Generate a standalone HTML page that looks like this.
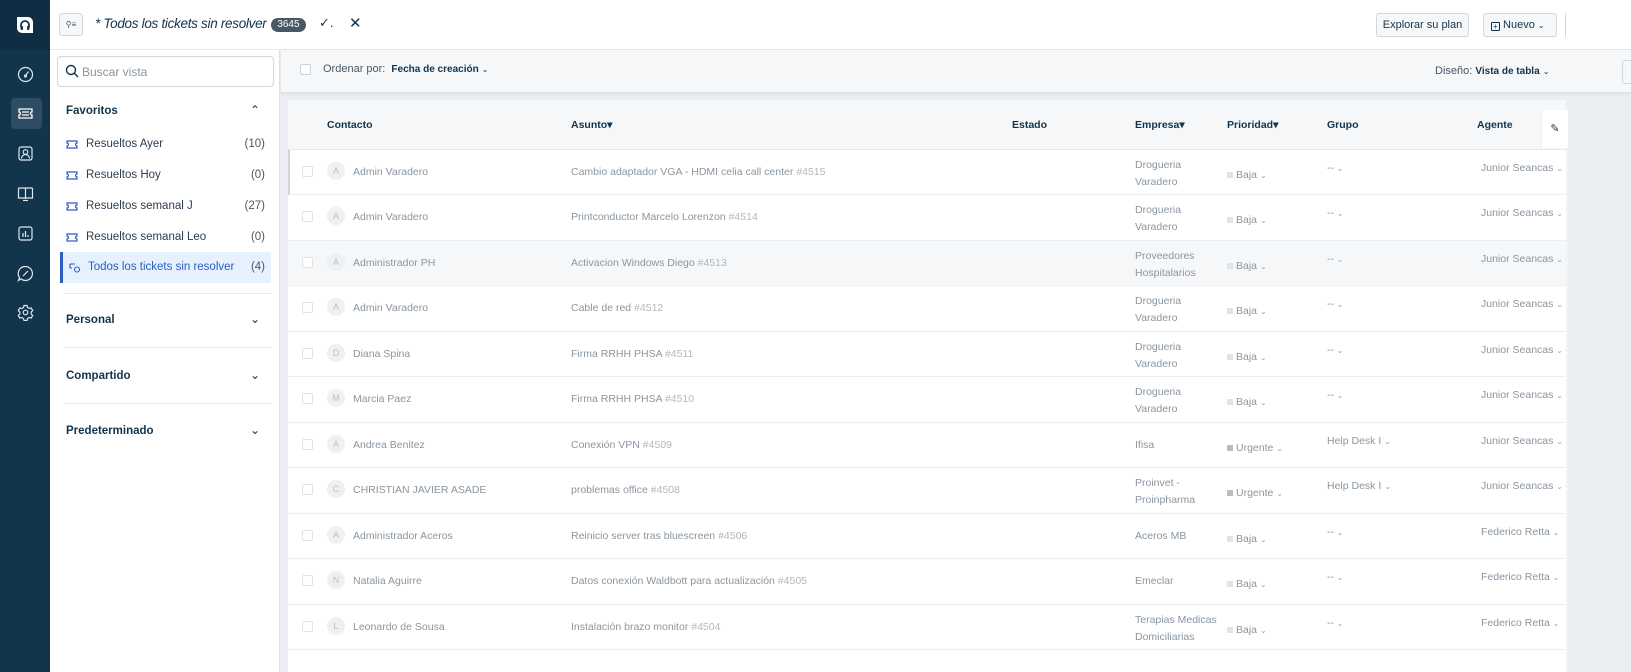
<!DOCTYPE html>
<html><head><meta charset="utf-8"><style>
*{box-sizing:border-box;margin:0;padding:0}
body{width:1631px;height:672px;overflow:hidden;font-family:"Liberation Sans",sans-serif;background:#ebeff3;position:relative;color:#12344d}
.a{position:absolute;white-space:nowrap}
#nav{left:0;top:0;width:50px;height:672px;background:#12344d}
#navtop{left:0;top:0;width:50px;height:50px;background:#0f2d43}
.ni{position:absolute;left:17px;width:17px;height:17px}
#top{left:50px;top:0;width:1581px;height:50px;background:#fff;border-bottom:1px solid #e3e8ed}
#views{left:50px;top:50px;width:230px;height:622px;background:#fff;border-right:1px solid #dfe4ea}
.vi{position:absolute;left:10px;width:211px;height:31px;font-size:11.5px;color:#2c3e50;white-space:nowrap}
.vi svg{position:absolute;left:6px;top:11px}
.vi .t{position:absolute;left:26px;top:9px}
.vi .c{position:absolute;right:6px;top:9px;color:#475867}
.sec{position:absolute;left:16px;font-size:11.5px;font-weight:bold;color:#12344d}
.chev{position:absolute;left:200px;font-size:12px;color:#12344d}
.hr{position:absolute;left:14px;width:208px;height:1px;background:#e8ecf0}
#tb{left:281px;top:50px;width:1350px;height:43px;background:#f5f7f9;border-bottom:1px solid #dfe4ea;box-shadow:0 1px 3px rgba(0,0,0,.08)}
#tbl{left:288px;top:100px;width:1278px;height:572px;background:#fff}
#th{left:288px;top:100px;width:1278px;height:50px;background:#f5f7f9;border-bottom:1px solid #e6eaee;font-size:10.5px;font-weight:bold;color:#12344d}
#th span{position:absolute;top:19px}
.row{position:absolute;left:288px;width:1278px;height:46px;border-bottom:1px solid #ebeff3;font-size:10.5px;color:#8a96a0;background:#fff;white-space:nowrap}
.row>*{position:absolute}
.cb{left:14px;top:16px;width:11px;height:11px;border:1px solid #dfe3e7;border-radius:2px;background:#fff}
.av{left:39px;top:12px;width:18px;height:18px;border-radius:50%;background:#eef0f2;color:#b8c0c6;font-size:9px;text-align:center;line-height:18px}
.nm{left:65px;top:16px;color:#8a96a0}
.sb{left:283px;top:16px}
.sb i{font-style:normal;color:#b0b8bf}
.em{left:847px;top:7px;line-height:17px}
.em1{left:847px;top:16px}
.pr{left:939px;top:19px}
.pr b{display:inline-block;width:6px;height:6px;background:#e1e4e7;margin-right:3px;vertical-align:0px}
.pr b.u{background:#b8bec4}
.gr{left:1039px;top:12px}
.ag{left:1193px;top:12px}
.k{font-size:8px;color:#9aa4ad}
</style></head><body>
<div id="nav" class="a"></div>
<div id="navtop" class="a"></div>
<svg class="a" style="left:13px;top:13px" width="24" height="24" viewBox="0 0 24 24"><path d="M4 4h11a5 5 0 0 1 5 5v11H9a5 5 0 0 1-5-5z" fill="#fff"/><path d="M8 14v-2a4 4 0 0 1 8 0v2" stroke="#12344d" stroke-width="1.8" fill="none"/><rect x="7.5" y="13" width="2.5" height="4" rx="1" fill="#12344d"/><rect x="14" y="13" width="2.5" height="4" rx="1" fill="#12344d"/></svg>
<div class="a" style="left:11px;top:98px;width:31px;height:31px;background:#2e4d65;border-radius:4px"></div>
<svg class="ni" style="top:66px" viewBox="0 0 17 17" fill="none" stroke="#dfe6ec" stroke-width="1.2"><circle cx="8.5" cy="8.5" r="7"/><path d="M8.5 9.5l3-4"/><circle cx="8.5" cy="10" r="1"/></svg>
<svg class="ni" style="top:105px" viewBox="0 0 17 17" fill="none" stroke="#fff" stroke-width="1.3"><path d="M2 4h13v3a1.5 1.5 0 0 0 0 3v3H2v-3a1.5 1.5 0 0 0 0-3z"/><path d="M5 7h7M5 10h7"/></svg>
<svg class="ni" style="top:145px" viewBox="0 0 17 17" fill="none" stroke="#dfe6ec" stroke-width="1.2"><rect x="2" y="2" width="13" height="13" rx="2"/><circle cx="8.5" cy="7" r="2.3"/><path d="M4.5 13.5a4 4 0 0 1 8 0"/></svg>
<svg class="ni" style="top:185px" viewBox="0 0 17 17" fill="none" stroke="#dfe6ec" stroke-width="1.2"><path d="M1.5 3h6a1 1 0 0 1 1 1v10M15.5 3h-6a1 1 0 0 0-1 1M1.5 3v10h14V3"/><path d="M6 15.5h5"/></svg>
<svg class="ni" style="top:225px" viewBox="0 0 17 17" fill="none" stroke="#dfe6ec" stroke-width="1.2"><rect x="2" y="2" width="13" height="13" rx="2"/><path d="M6 12V8M8.5 12V6M11 12v-2"/></svg>
<svg class="ni" style="top:265px" viewBox="0 0 17 17" fill="none" stroke="#dfe6ec" stroke-width="1.2"><path d="M8.5 1.5a7 7 0 1 1-4.5 12.4L1.5 15.5l1-3A7 7 0 0 1 8.5 1.5z"/><path d="M6 11l5-5"/></svg>
<svg class="ni" style="top:304px" viewBox="0 0 17 17" fill="none" stroke="#dfe6ec" stroke-width="1.2"><circle cx="8.5" cy="8.5" r="2.3"/><path d="M7 1.5h3l.5 2 1.7 1 2-.6 1.5 2.6-1.5 1.5v2l1.5 1.5-1.5 2.6-2-.6-1.7 1-.5 2H7l-.5-2-1.7-1-2 .6-1.5-2.6 1.5-1.5v-2L1.3 6.5l1.5-2.6 2 .6 1.7-1z"/></svg>

<div id="top" class="a">
  <div class="a" style="left:9px;top:13px;width:24px;height:23px;border:1px solid #cfd7df;border-radius:3px;background:#f5f7f9;font-size:8px;text-align:center;line-height:21px;color:#475867">⚲≡</div>
  <div class="a" style="left:45px;top:16px;font-size:13.5px;font-style:italic;color:#12344d;letter-spacing:-0.3px">* Todos los tickets sin resolver <span style="display:inline-block;font-style:normal;letter-spacing:0;width:35px;height:14px;border-radius:7px;background:#475867;color:#fff;font-size:10px;text-align:center;line-height:14px;vertical-align:1px;margin-left:1px">3645</span></div>
  <div class="a" style="left:269px;top:15px;font-size:13px;color:#12344d">✓.</div>
  <div class="a" style="left:299px;top:14px;font-size:15px;color:#12344d">✕</div>
  <div class="a" style="left:1326px;top:13px;width:93px;height:24px;border:1px solid #cfd7df;border-radius:3px;background:#f5f7f9;font-size:11px;text-align:center;line-height:22px">Explorar su plan</div>
  <div class="a" style="left:1433px;top:13px;width:74px;height:24px;border:1px solid #cfd7df;border-radius:3px;background:#f5f7f9;font-size:11px;line-height:22px;padding-left:7px"><span style="display:inline-block;width:9px;height:9px;border:1px solid #12344d;border-radius:1px;font-size:8px;line-height:7px;text-align:center;vertical-align:-1px">+</span> Nuevo <span class="k" style="color:#12344d">⌄</span></div>
  <div class="a" style="left:1515px;top:13px;width:1px;height:24px;background:#cfd7df"></div>
</div>

<div id="views" class="a">
  <div class="a" style="left:7px;top:6px;width:217px;height:31px;border:1px solid #cfd7df;border-radius:4px"></div>
  <svg class="a" style="left:15px;top:14px" width="14" height="14" viewBox="0 0 14 14" fill="none" stroke="#12344d" stroke-width="1.4"><circle cx="6" cy="6" r="4.5"/><path d="M9.3 9.3L13 13"/></svg>
  <div class="a" style="left:32px;top:15px;font-size:12px;color:#8a96a0">Buscar vista</div>
  <div class="sec" style="top:55px">Favoritos</div><div class="chev" style="top:53px">⌃</div>
  <div class="vi" style="top:79px"><svg width="12" height="9" viewBox="0 0 12 9" fill="none" stroke="#2c5cc5" stroke-width="1.2"><path d="M1 1h10v2a1.5 1.5 0 0 0 0 3v2H1V6a1.5 1.5 0 0 0 0-3z"/></svg><span class="t">Resueltos Ayer</span><span class="c">(10)</span></div>
  <div class="vi" style="top:110px"><svg width="12" height="9" viewBox="0 0 12 9" fill="none" stroke="#2c5cc5" stroke-width="1.2"><path d="M1 1h10v2a1.5 1.5 0 0 0 0 3v2H1V6a1.5 1.5 0 0 0 0-3z"/></svg><span class="t">Resueltos Hoy</span><span class="c">(0)</span></div>
  <div class="vi" style="top:141px"><svg width="12" height="9" viewBox="0 0 12 9" fill="none" stroke="#2c5cc5" stroke-width="1.2"><path d="M1 1h10v2a1.5 1.5 0 0 0 0 3v2H1V6a1.5 1.5 0 0 0 0-3z"/></svg><span class="t">Resueltos semanal J</span><span class="c">(27)</span></div>
  <div class="vi" style="top:172px"><svg width="12" height="9" viewBox="0 0 12 9" fill="none" stroke="#2c5cc5" stroke-width="1.2"><path d="M1 1h10v2a1.5 1.5 0 0 0 0 3v2H1V6a1.5 1.5 0 0 0 0-3z"/></svg><span class="t">Resueltos semanal Leo</span><span class="c">(0)</span></div>
  <div class="vi" style="top:202px;background:#e5f2fd;border-left:3px solid #2c5cc5;border-radius:0 3px 3px 0;color:#2c5cc5"><svg style="left:6px" width="12" height="10" viewBox="0 0 12 10" fill="none" stroke="#2c5cc5" stroke-width="1.1"><path d="M1 1h5M1 1v4M1 5h2"/><circle cx="8" cy="6.5" r="2.5"/></svg><span class="t" style="left:25px">Todos los tickets sin resolver</span><span class="c">(4)</span></div>
  <div class="hr" style="top:243px"></div>
  <div class="sec" style="top:264px">Personal</div><div class="chev" style="top:262px">⌄</div>
  <div class="hr" style="top:297px"></div>
  <div class="sec" style="top:320px">Compartido</div><div class="chev" style="top:318px">⌄</div>
  <div class="hr" style="top:353px"></div>
  <div class="sec" style="top:375px">Predeterminado</div><div class="chev" style="top:373px">⌄</div>
</div>

<div id="tb" class="a">
  <div class="a" style="left:19px;top:14px;width:11px;height:11px;border:1px solid #c9d1d8;border-radius:2px;background:#fff"></div>
  <div class="a" style="left:42px;top:13px;font-size:11px;color:#475867">Ordenar por: <b style="color:#12344d;font-size:10px;margin-left:3px">Fecha de creación</b> <span class="k" style="color:#12344d">⌄</span></div>
  <div class="a" style="left:1154px;top:15px;font-size:11px;color:#475867">Diseño: <b style="color:#12344d;font-size:10px">Vista de tabla</b> <span class="k" style="color:#12344d">⌄</span></div>
  <div class="a" style="left:1341px;top:10px;width:9px;height:24px;border:1px solid #cfd7df;border-right:none;border-radius:3px 0 0 3px"></div>
</div>

<div id="tbl" class="a"></div>
<div id="th" class="a">
  <span style="left:39px">Contacto</span><span style="left:283px">Asunto▾</span><span style="left:724px">Estado</span><span style="left:847px">Empresa▾</span><span style="left:939px">Prioridad▾</span><span style="left:1039px">Grupo</span><span style="left:1189px">Agente</span>
</div>
<div class="a" style="left:1541px;top:110px;width:27px;height:38px;background:#fff;border-left:1px solid #eef1f4;font-size:11px;text-align:center;line-height:38px;color:#12344d">✎</div>
<div class="a" style="left:1566px;top:150px;width:2px;height:522px;background:#f1f3f5"></div>

<div class="row" style="top:150px;height:45px"><div class="cb"></div><div class="av">A</div><div class="nm">Admin Varadero</div><div class="sb">Cambio adaptador VGA - HDMI celia call center <i>#4515</i></div><div class="em">Drogueria<br>Varadero</div><div class="pr"><b></b>Baja <span class="k">⌄</span></div><div class="gr">-- <span class="k">⌄</span></div><div class="ag">Junior Seancas <span class="k">⌄</span></div></div>
<div class="a" style="left:288px;top:150px;width:2px;height:45px;background:#cfd5db"></div>
<div class="row" style="top:195px"><div class="cb"></div><div class="av">A</div><div class="nm">Admin Varadero</div><div class="sb">Printconductor Marcelo Lorenzon <i>#4514</i></div><div class="em">Drogueria<br>Varadero</div><div class="pr"><b></b>Baja <span class="k">⌄</span></div><div class="gr">-- <span class="k">⌄</span></div><div class="ag">Junior Seancas <span class="k">⌄</span></div></div>
<div class="row" style="top:241px;height:45px;background:#f5f7f9"><div class="cb"></div><div class="av">A</div><div class="nm">Administrador PH</div><div class="sb">Activacion Windows Diego <i>#4513</i></div><div class="em">Proveedores<br>Hospitalarios</div><div class="pr"><b></b>Baja <span class="k">⌄</span></div><div class="gr">-- <span class="k">⌄</span></div><div class="ag">Junior Seancas <span class="k">⌄</span></div></div>
<div class="row" style="top:286px"><div class="cb"></div><div class="av">A</div><div class="nm">Admin Varadero</div><div class="sb">Cable de red <i>#4512</i></div><div class="em">Drogueria<br>Varadero</div><div class="pr"><b></b>Baja <span class="k">⌄</span></div><div class="gr">-- <span class="k">⌄</span></div><div class="ag">Junior Seancas <span class="k">⌄</span></div></div>
<div class="row" style="top:332px;height:45px"><div class="cb"></div><div class="av">D</div><div class="nm">Diana Spina</div><div class="sb">Firma RRHH PHSA <i>#4511</i></div><div class="em">Drogueria<br>Varadero</div><div class="pr"><b></b>Baja <span class="k">⌄</span></div><div class="gr">-- <span class="k">⌄</span></div><div class="ag">Junior Seancas <span class="k">⌄</span></div></div>
<div class="row" style="top:377px"><div class="cb"></div><div class="av">M</div><div class="nm">Marcia Paez</div><div class="sb">Firma RRHH PHSA <i>#4510</i></div><div class="em">Drogueria<br>Varadero</div><div class="pr"><b></b>Baja <span class="k">⌄</span></div><div class="gr">-- <span class="k">⌄</span></div><div class="ag">Junior Seancas <span class="k">⌄</span></div></div>
<div class="row" style="top:423px;height:45px"><div class="cb"></div><div class="av">A</div><div class="nm">Andrea Benitez</div><div class="sb">Conexión VPN <i>#4509</i></div><div class="em1">Ifisa</div><div class="pr"><b class="u"></b>Urgente <span class="k">⌄</span></div><div class="gr">Help Desk I <span class="k">⌄</span></div><div class="ag">Junior Seancas <span class="k">⌄</span></div></div>
<div class="row" style="top:468px"><div class="cb"></div><div class="av">C</div><div class="nm">CHRISTIAN JAVIER ASADE</div><div class="sb">problemas office <i>#4508</i></div><div class="em">Proinvet -<br>Proinpharma</div><div class="pr"><b class="u"></b>Urgente <span class="k">⌄</span></div><div class="gr">Help Desk I <span class="k">⌄</span></div><div class="ag">Junior Seancas <span class="k">⌄</span></div></div>
<div class="row" style="top:514px;height:45px"><div class="cb"></div><div class="av">A</div><div class="nm">Administrador Aceros</div><div class="sb">Reinicio server tras bluescreen <i>#4506</i></div><div class="em1">Aceros MB</div><div class="pr"><b></b>Baja <span class="k">⌄</span></div><div class="gr">-- <span class="k">⌄</span></div><div class="ag">Federico Retta <span class="k">⌄</span></div></div>
<div class="row" style="top:559px"><div class="cb"></div><div class="av">N</div><div class="nm">Natalia Aguirre</div><div class="sb">Datos conexión Waldbott para actualización <i>#4505</i></div><div class="em1">Emeclar</div><div class="pr"><b></b>Baja <span class="k">⌄</span></div><div class="gr">-- <span class="k">⌄</span></div><div class="ag">Federico Retta <span class="k">⌄</span></div></div>
<div class="row" style="top:605px;height:45px"><div class="cb"></div><div class="av">L</div><div class="nm">Leonardo de Sousa</div><div class="sb">Instalación brazo monitor <i>#4504</i></div><div class="em">Terapias Medicas<br>Domiciliarias</div><div class="pr"><b></b>Baja <span class="k">⌄</span></div><div class="gr">-- <span class="k">⌄</span></div><div class="ag">Federico Retta <span class="k">⌄</span></div></div>
</body></html>
